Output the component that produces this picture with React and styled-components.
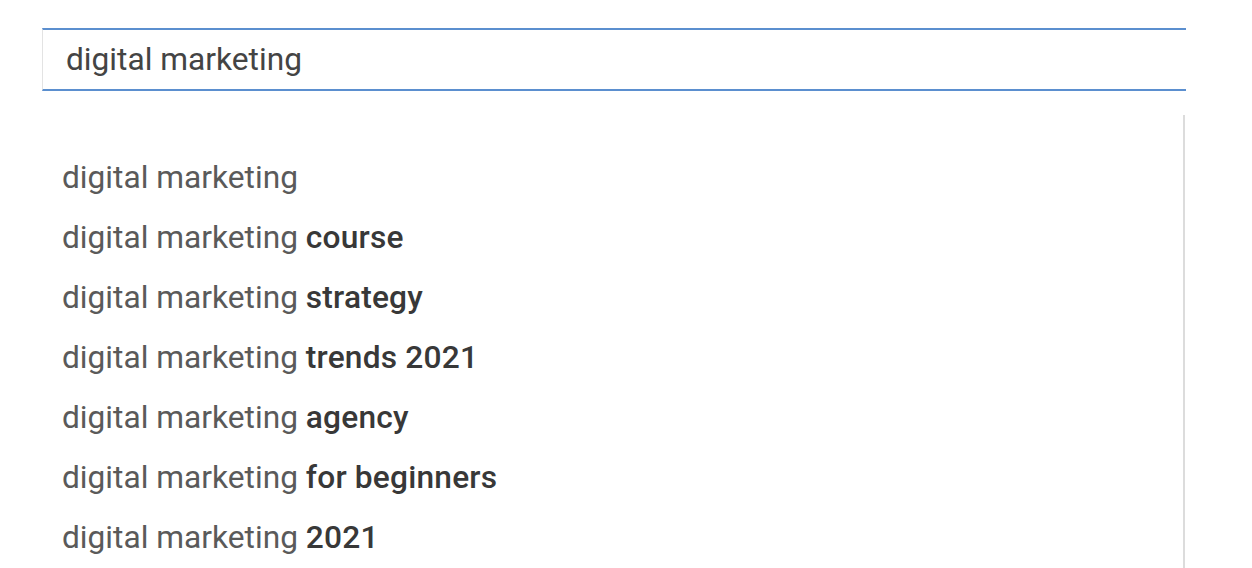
import React from "react";
import styled, { createGlobalStyle } from "styled-components";

const Global = createGlobalStyle`
  html, body { margin: 0; padding: 0; background: #fff; }
  body { font-family: Roboto, "Noto Sans", sans-serif; }
`;

const Page = styled.div`
  padding: 28px 66px 0 42px;
  width: 1252px;
  height: 568px;
  box-sizing: border-box;
  overflow: hidden;
`;

const SearchBox = styled.div`
  width: 1144px;
  height: 63px;
  box-sizing: border-box;
  border-top: 2px solid #5b8fcf;
  border-bottom: 2px solid #5b8fcf;
  border-left: 1px solid #e3e3e3;
  display: flex;
  align-items: center;
  padding-left: 23px;
  font-size: 31.7px;
  color: #444;
`;

const Dropdown = styled.div`
  margin-top: 24px;
  width: 1143px;
  box-sizing: border-box;
  border-right: 2px solid #dcdcdc;
  padding-top: 32px;
  height: 500px;
  display: flex;
  flex-direction: column;
`;

const Row = styled.div`
  height: 60px;
  display: flex;
  align-items: center;
  padding-left: 20px;
  font-size: 31.7px;
  color: #5a5a5a;
  white-space: pre;
`;

const Strong = styled.span`
  font-weight: 500;
  color: #383838;
  letter-spacing: 0.2px;
`;

const suggestions = ["", "course", "strategy", "trends 2021", "agency", "for beginners", "2021"];

export default function App() {
  return (
    <Page>
      <Global />
      <SearchBox>digital marketing</SearchBox>
      <Dropdown>
        {suggestions.map((s) => (
          <Row key={s}>
            digital marketing{s ? " " : ""}
            {s && <Strong>{s}</Strong>}
          </Row>
        ))}
      </Dropdown>
    </Page>
  );
}
